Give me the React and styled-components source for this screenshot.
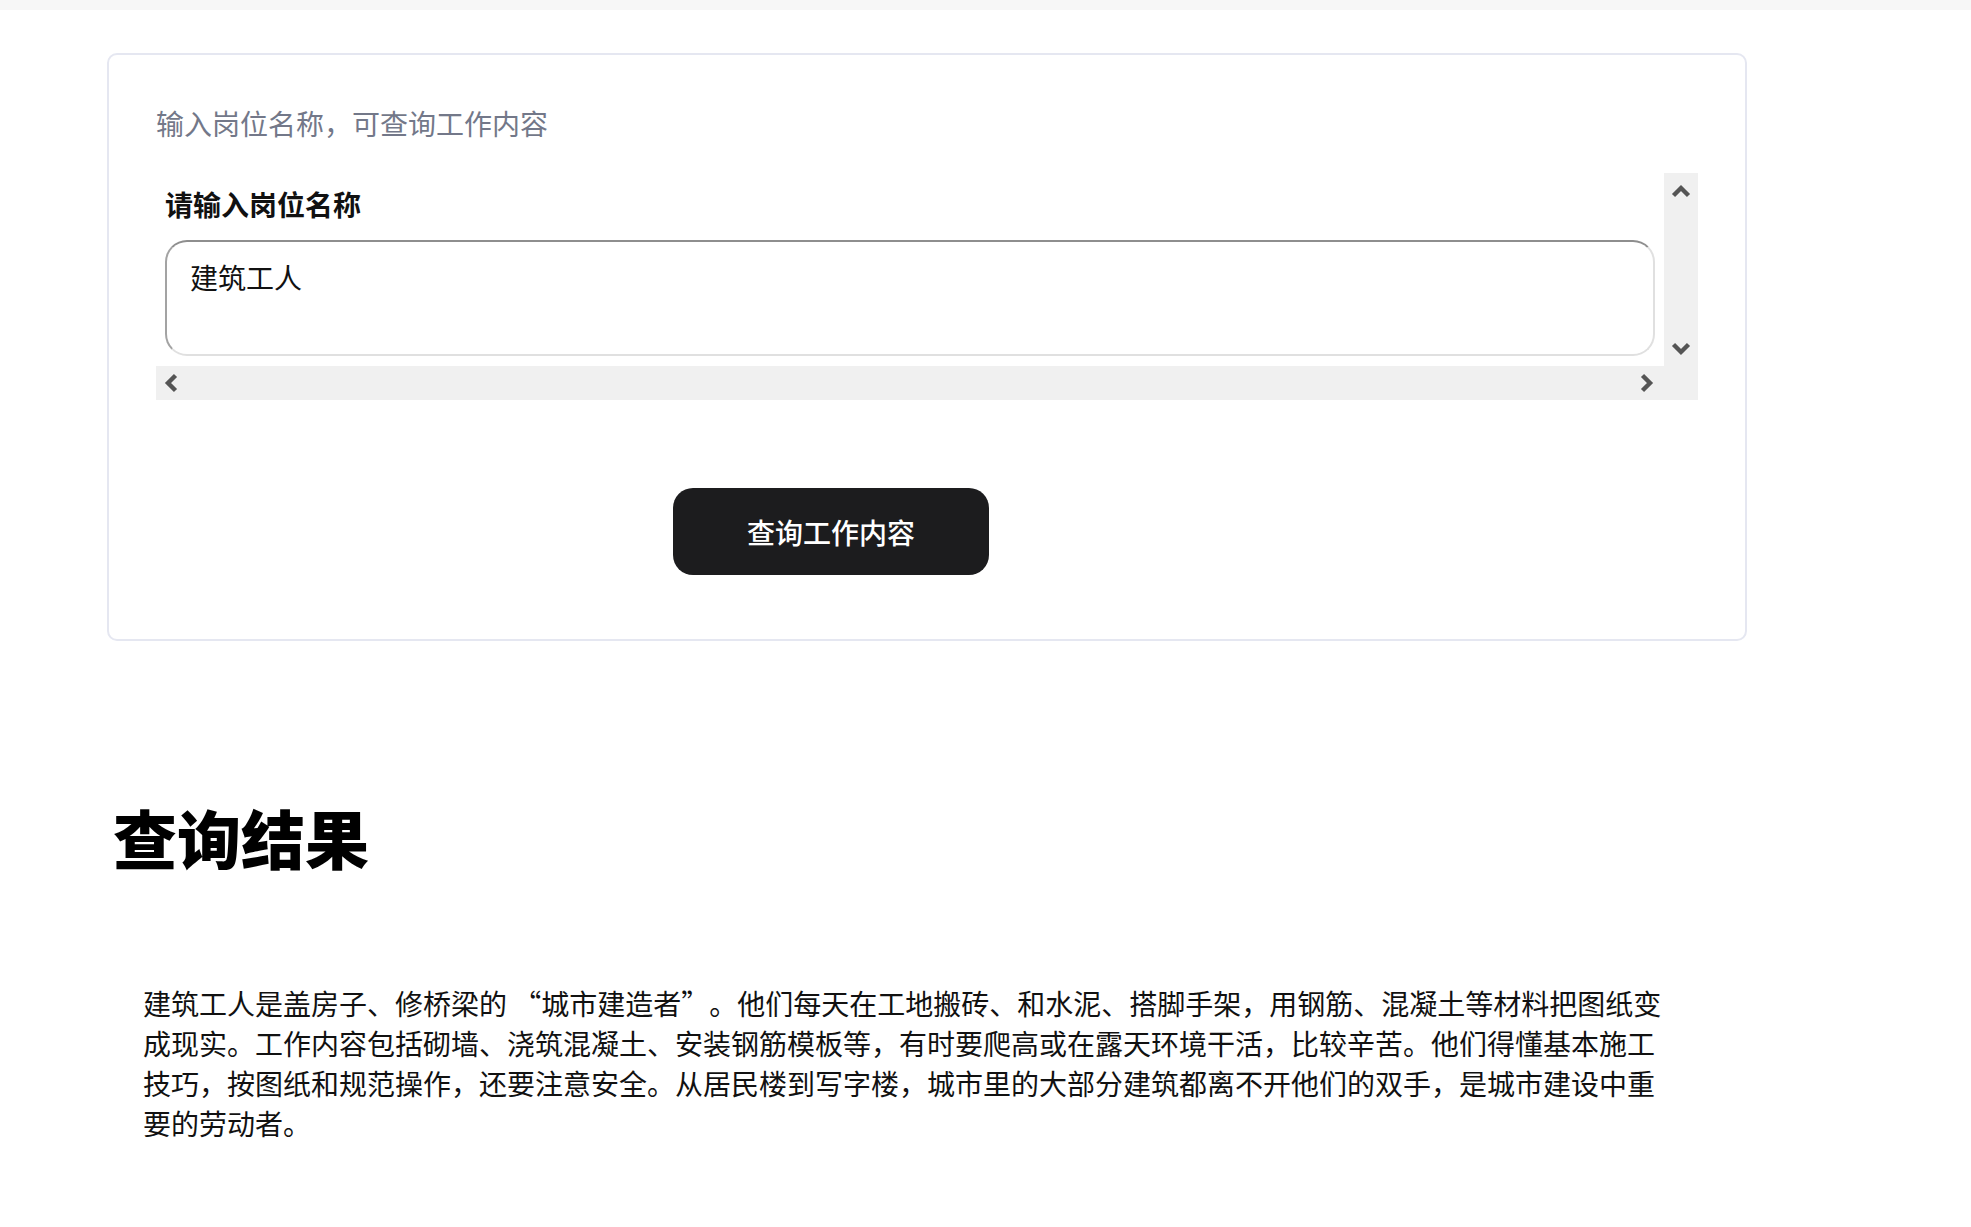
import React from "react";
import styled, { createGlobalStyle } from "styled-components";

const GlobalStyle = createGlobalStyle`
  body {
    margin: 0;
    background: #ffffff;
    font-family: "Noto Sans CJK SC", "Noto Sans", sans-serif;
    color: #111111;
    text-spacing-trim: space-all;
  }
`;

const TopBar = styled.div`
  height: 10px;
  background: #f7f7f7;
`;

const Page = styled.div`
  padding: 43px 0 80px 107px;
`;

const Card = styled.div`
  box-sizing: border-box;
  width: 1640px;
  border: 2px solid #e5e7f1;
  border-radius: 10px;
  padding: 48px 47px 64px 47px;
`;

const Hint = styled.p`
  margin: 0;
  font-size: 28px;
  line-height: 40px;
  color: #737889;
`;

const ScrollFrame = styled.div`
  margin-top: 30px;
  width: 1542px;
  display: grid;
  grid-template-columns: 1fr 34px;
  grid-template-rows: 193px 34px;
  background: #f0f0f0;
`;

const FrameContent = styled.div`
  background: #ffffff;
  padding: 11px 0 0 9px;
  overflow: hidden;
`;

const Label = styled.label`
  display: block;
  font-size: 28px;
  line-height: 40px;
  font-weight: 600;
  color: #111111;
`;

const TextArea = styled.textarea`
  display: block;
  box-sizing: border-box;
  margin-top: 16px;
  width: 1490px;
  height: 116px;
  padding: 15px 23px;
  border: 2px solid;
  border-color: #8e8e8e #e0e0e0 #e0e0e0 #a3a3a3;
  border-radius: 22px;
  font-family: inherit;
  font-size: 28px;
  line-height: 40px;
  color: #111111;
  resize: none;
  outline: none;
  background: #ffffff;
`;

const Bar = styled.div`
  display: flex;
  flex-direction: ${(p) => (p.$vertical ? "column" : "row")};
  justify-content: space-between;
  align-items: center;
  padding: ${(p) => (p.$vertical ? "11px 0 10px" : "0 10px 0 8px")};
  background: #f0f0f0;
`;

const Corner = styled.div`
  background: #f0f0f0;
`;

const Arrow = styled.svg`
  display: block;
`;

function Chevron({ dir }) {
  const vertical = dir === "up" || dir === "down";
  const w = vertical ? 20 : 14;
  const h = vertical ? 14 : 20;
  const pts = {
    up: "2.5,11.5 10,4 17.5,11.5",
    down: "2.5,2.5 10,10 17.5,2.5",
    left: "11.5,2.5 4,10 11.5,17.5",
    right: "2.5,2.5 10,10 2.5,17.5",
  }[dir];
  return (
    <Arrow width={w} height={h} viewBox={`0 0 ${w} ${h}`}>
      <polyline points={pts} fill="none" stroke="#555555" strokeWidth="4.4" />
    </Arrow>
  );
}

const ButtonRow = styled.div`
  margin-top: 88px;
  padding-left: 517px;
`;

const QueryButton = styled.button`
  width: 316px;
  height: 87px;
  border: none;
  border-radius: 20px;
  background: #1c1c1e;
  color: #ffffff;
  font-family: inherit;
  font-size: 28px;
  font-weight: 500;
  cursor: pointer;
`;

const ResultTitle = styled.h1`
  margin: 157px 0 0 6px;
  font-size: 64px;
  line-height: 77px;
  font-weight: 900;
  color: #000000;
`;

const ResultText = styled.p`
  margin: 108px 0 0 36px;
  width: 1530px;
  font-size: 28px;
  line-height: 40px;
  color: #111111;
`;

export default function App() {
  return (
    <>
      <GlobalStyle />
      <TopBar />
      <Page>
        <Card>
          <Hint>输入岗位名称，可查询工作内容</Hint>
          <ScrollFrame>
            <FrameContent>
              <Label htmlFor="job">请输入岗位名称</Label>
              <TextArea id="job" defaultValue="建筑工人" readOnly />
            </FrameContent>
            <Bar $vertical>
              <Chevron dir="up" />
              <Chevron dir="down" />
            </Bar>
            <Bar>
              <Chevron dir="left" />
              <Chevron dir="right" />
            </Bar>
            <Corner />
          </ScrollFrame>
          <ButtonRow>
            <QueryButton>查询工作内容</QueryButton>
          </ButtonRow>
        </Card>
        <ResultTitle>查询结果</ResultTitle>
        <ResultText>
          建筑工人是盖房子、修桥梁的 “城市建造者”。他们每天在工地搬砖、和水泥、搭脚手架，用钢筋、混凝土等材料把图纸变成现实。工作内容包括砌墙、浇筑混凝土、安装钢筋模板等，有时要爬高或在露天环境干活，比较辛苦。他们得懂基本施工技巧，按图纸和规范操作，还要注意安全。从居民楼到写字楼，城市里的大部分建筑都离不开他们的双手，是城市建设中重要的劳动者。
        </ResultText>
      </Page>
    </>
  );
}
